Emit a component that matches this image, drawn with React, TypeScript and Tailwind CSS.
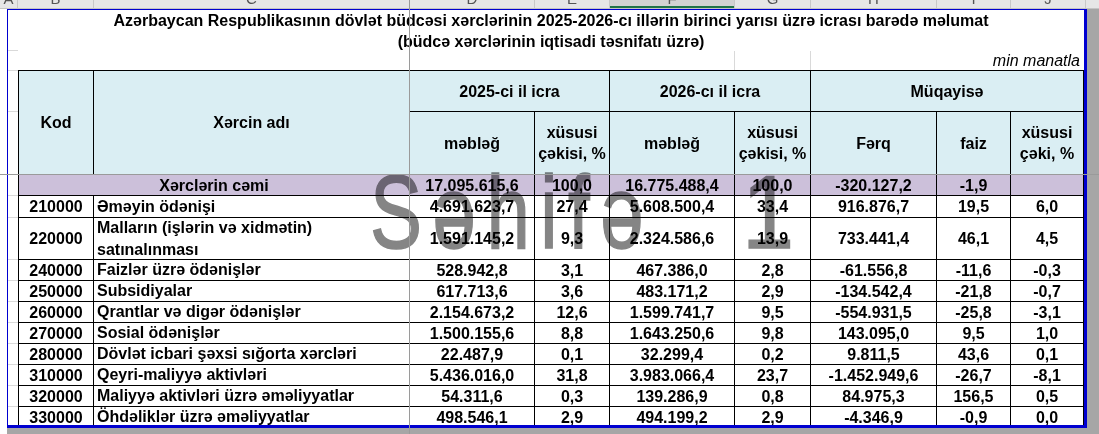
import React from "react";

const FONT = "font-['Liberation_Sans',Arial,sans-serif]";
const cell = "border-r border-b border-black flex items-center justify-center text-center";
const HBG = "bg-[#daeef3]";
const PBG = "bg-[#ccc0da]";

type Row = { code: string; name: React.ReactNode; v: string[] };

const rows: Row[] = [
  { code: "210000", name: "Əməyin ödənişi", v: ["4.691.623,7", "27,4", "5.608.500,4", "33,4", "916.876,7", "19,5", "6,0"] },
  {
    code: "220000",
    name: (
      <>
        Malların (işlərin və xidmətin)
        <br />
        satınalınması
      </>
    ),
    v: ["1.591.145,2", "9,3", "2.324.586,6", "13,9", "733.441,4", "46,1", "4,5"],
  },
  { code: "240000", name: "Faizlər üzrə ödənişlər", v: ["528.942,8", "3,1", "467.386,0", "2,8", "-61.556,8", "-11,6", "-0,3"] },
  { code: "250000", name: "Subsidiyalar", v: ["617.713,6", "3,6", "483.171,2", "2,9", "-134.542,4", "-21,8", "-0,7"] },
  { code: "260000", name: "Qrantlar və digər ödənişlər", v: ["2.154.673,2", "12,6", "1.599.741,7", "9,5", "-554.931,5", "-25,8", "-3,1"] },
  { code: "270000", name: "Sosial ödənişlər", v: ["1.500.155,6", "8,8", "1.643.250,6", "9,8", "143.095,0", "9,5", "1,0"] },
  { code: "280000", name: "Dövlət icbari şəxsi sığorta xərcləri", v: ["22.487,9", "0,1", "32.299,4", "0,2", "9.811,5", "43,6", "0,1"] },
  { code: "310000", name: "Qeyri-maliyyə aktivləri", v: ["5.436.016,0", "31,8", "3.983.066,4", "23,7", "-1.452.949,6", "-26,7", "-8,1"] },
  { code: "320000", name: "Maliyyə aktivləri üzrə əməliyyatlar", v: ["54.311,6", "0,3", "139.286,9", "0,8", "84.975,3", "156,5", "0,5"] },
  { code: "330000", name: "Öhdəliklər üzrə əməliyyatlar", v: ["498.546,1", "2,9", "494.199,2", "2,9", "-4.346,9", "-0,9", "0,0"] },
];

const colHeads: { w: string; l: string; sel?: boolean }[] = [
  { w: "w-[18px]", l: "A" },
  { w: "w-[76px]", l: "B" },
  { w: "w-[316px]", l: "C" },
  { w: "w-[125px]", l: "D" },
  { w: "w-[75px]", l: "E" },
  { w: "w-[125px]", l: "F", sel: true },
  { w: "w-[76px]", l: "G" },
  { w: "w-[126px]", l: "H" },
  { w: "w-[74px]", l: "I" },
  { w: "w-[75px]", l: "J" },
  { w: "w-[40px]", l: "K" },
];

const aLines = [
  "h-[41px]",
  "h-[20px]",
  "h-[41px]",
  "h-[63px]",
  "h-[21px]",
  "h-[22px]",
  "h-[42px]",
  "h-[21px]",
  "h-[21px]",
  "h-[21px]",
  "h-[21px]",
  "h-[21px]",
  "h-[21px]",
  "h-[21px]",
  "h-[21px]",
];

export default function App() {
  return (
    <div className={`relative w-[1099px] h-[434px] overflow-hidden bg-white text-black ${FONT}`}>
      {/* Excel column header strip */}
      <div className="flex h-[9px] bg-[#e6e6e6] border-b border-[#c4c4c4] overflow-hidden text-[15px] leading-[15px] text-[#555]">
        {colHeads.map((c) => (
          <div
            key={c.l}
            className={`${c.w} shrink-0 flex justify-center items-start border-r border-[#c8c8c8] ${
              c.sel ? "bg-[#d2d2d2] shadow-[inset_0_-2px_0_#217346]" : ""
            }`}
          >
            <span className="-mt-[9px]">{c.l}</span>
          </div>
        ))}
      </div>

      <div className="flex h-[425px]">
        <div className="w-[7px] shrink-0 bg-white" />
        <div className="w-[1080px] shrink-0 flex flex-col">
          {/* page (print area) */}
          <div className="h-[419px] shrink-0 flex overflow-hidden border-l border-t border-r-[3px] border-b-[3px] border-[#0000d0] bg-white">
            {/* column A gridlines */}
            <div className="w-[10px] shrink-0 flex flex-col">
              {aLines.map((h, i) => (
                <div key={i} className={`${h} shrink-0 border-b border-[#d9d9d9]`} />
              ))}
            </div>

            <div className="w-[1066px] shrink-0 flex flex-col">
              {/* title */}
              <div className="h-[41px] shrink-0 flex flex-col items-center font-bold text-[16px] leading-[21px] whitespace-nowrap">
                <div>
                  Azərbaycan Respublikasının dövlət büdcəsi xərclərinin 2025-2026-cı illərin birinci yarısı üzrə icrası
                  barədə məlumat
                </div>
                <div>(büdcə xərclərinin iqtisadi təsnifatı üzrə)</div>
              </div>

              {/* unit row */}
              <div className="h-[19px] shrink-0 flex">
                <div className="w-[717px] shrink-0 border-r border-[#d9d9d9]" />
                <div className="w-[76px] shrink-0 border-r border-[#d9d9d9]" />
                <div className="flex-1 flex items-center justify-end pr-[4px] italic text-[16px] leading-[19px] whitespace-nowrap">
                  min manatla
                </div>
              </div>

              {/* table */}
              <div className="shrink-0 w-[1066px] grid grid-cols-[75px_316px_125px_75px_125px_76px_126px_74px_73px] grid-rows-[41px_63px_21px_22px_42px_repeat(8,21px)] border-l border-t border-black font-bold text-[16px] leading-[21px]">
                <div className={`${cell} ${HBG} row-span-2`}>Kod</div>
                <div className={`${cell} ${HBG} row-span-2`}>Xərcin adı</div>
                <div className={`${cell} ${HBG} col-span-2`}>2025-ci il icra</div>
                <div className={`${cell} ${HBG} col-span-2`}>2026-cı il icra</div>
                <div className={`${cell} ${HBG} col-span-3`}>Müqayisə</div>

                <div className={`${cell} ${HBG}`}>məbləğ</div>
                <div className={`${cell} ${HBG}`}>
                  xüsusi
                  <br />
                  çəkisi, %
                </div>
                <div className={`${cell} ${HBG}`}>məbləğ</div>
                <div className={`${cell} ${HBG}`}>
                  xüsusi
                  <br />
                  çəkisi, %
                </div>
                <div className={`${cell} ${HBG}`}>Fərq</div>
                <div className={`${cell} ${HBG}`}>faiz</div>
                <div className={`${cell} ${HBG}`}>
                  xüsusi
                  <br />
                  çəki, %
                </div>

                <div className={`${cell} ${PBG} col-span-2`}>Xərclərin cəmi</div>
                <div className={`${cell} ${PBG}`}>17.095.615,6</div>
                <div className={`${cell} ${PBG}`}>100,0</div>
                <div className={`${cell} ${PBG}`}>16.775.488,4</div>
                <div className={`${cell} ${PBG}`}>100,0</div>
                <div className={`${cell} ${PBG}`}>-320.127,2</div>
                <div className={`${cell} ${PBG}`}>-1,9</div>
                <div className={`${cell} ${PBG}`} />

                {rows.map((r) => (
                  <React.Fragment key={r.code}>
                    <div className={cell}>{r.code}</div>
                    <div className="border-r border-b border-black flex items-center justify-start text-left pl-[3px] leading-[22px] whitespace-nowrap">
                      <span>{r.name}</span>
                    </div>
                    {r.v.map((x, i) => (
                      <div key={i} className={cell}>
                        {x}
                      </div>
                    ))}
                  </React.Fragment>
                ))}
              </div>
            </div>
          </div>
          <div className="flex-1 bg-[#a6a6a6]" />
        </div>
        <div className="flex-1 bg-[#a6a6a6]" />
      </div>

      {/* page watermark */}
      <div className="absolute left-[370px] top-[160px] text-[104px] leading-none text-[#858585] mix-blend-multiply origin-left scale-x-[0.75] tracking-[14px] whitespace-nowrap pointer-events-none [-webkit-text-stroke:1.5px_#858585]">
        Səhifə
      </div>
      <div className="absolute left-[742px] top-[160px] text-[104px] leading-none text-[#858585] mix-blend-multiply origin-left scale-x-[0.9] whitespace-nowrap pointer-events-none [-webkit-text-stroke:1.5px_#858585]">
        1
      </div>

      {/* frozen pane lines */}
      <div className="absolute left-[409px] top-0 w-px h-[434px] bg-[#9a9a9a]" />
      <div className="absolute left-0 top-[174px] w-[1099px] h-px bg-[#9a9a9a]" />
    </div>
  );
}
